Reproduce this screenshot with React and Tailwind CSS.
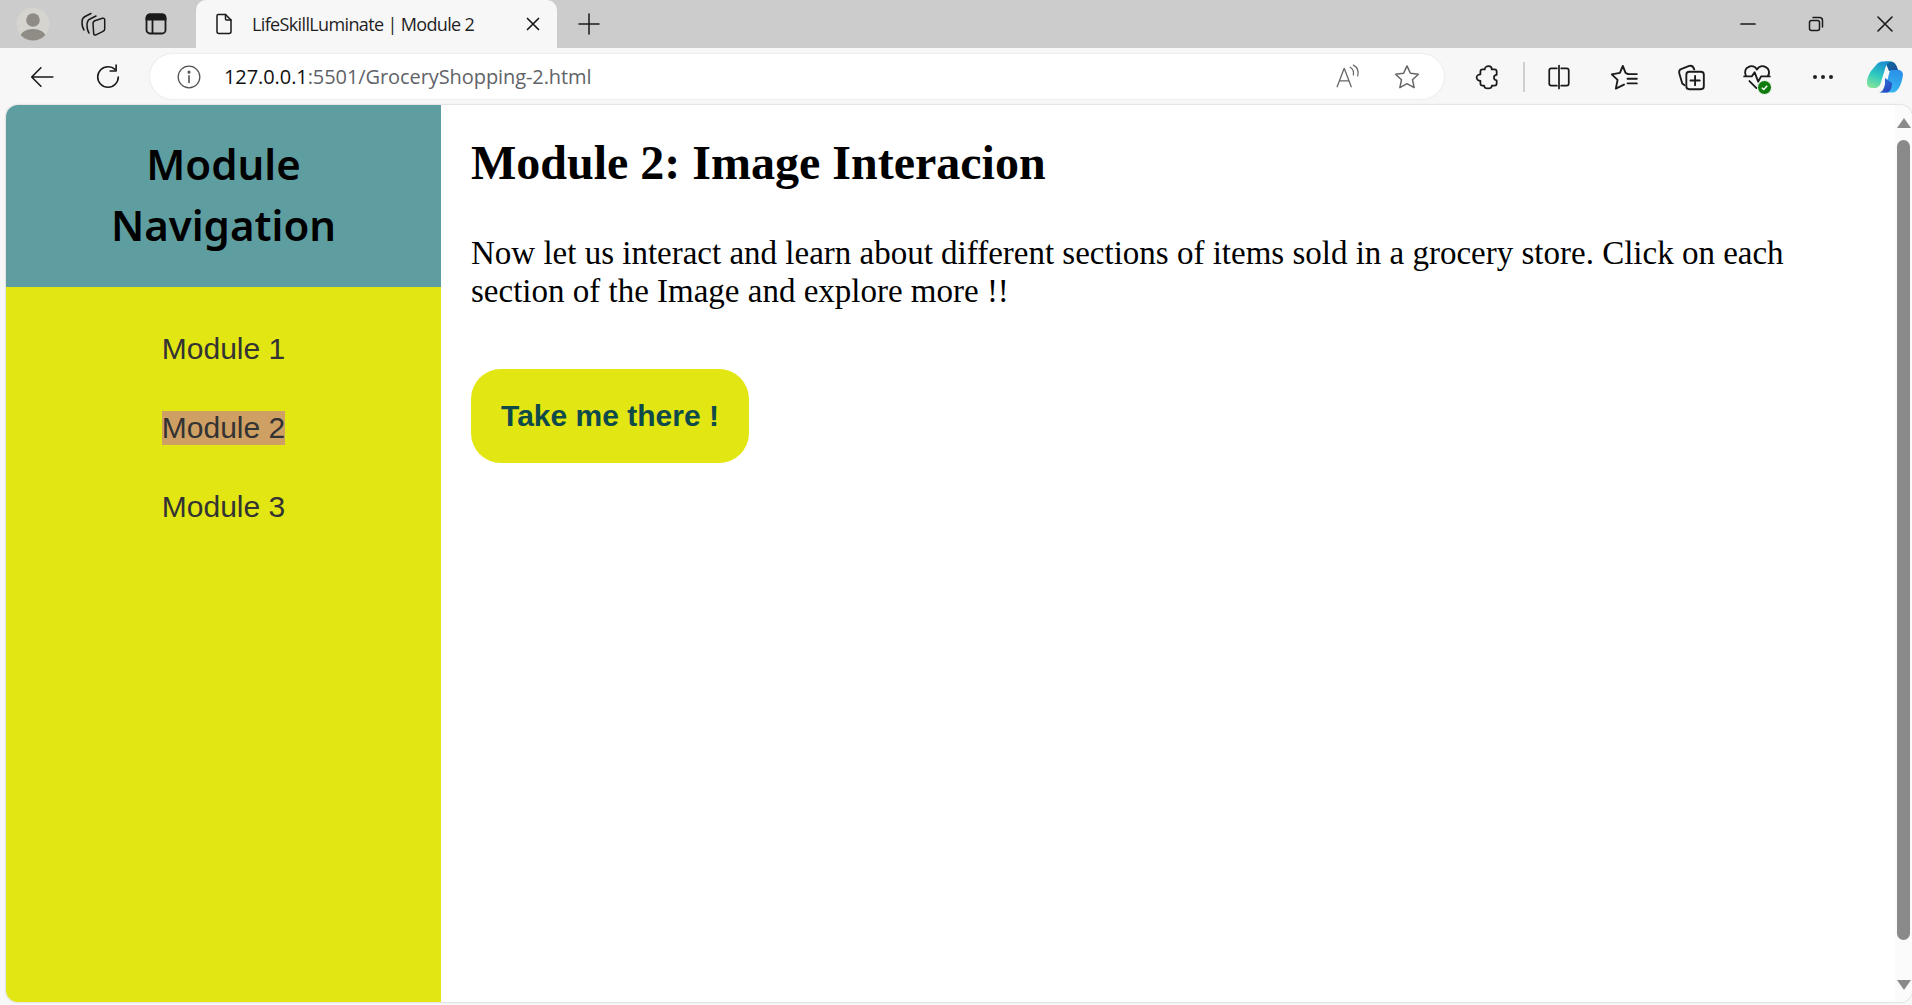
import React from "react";

const Ic = ({ className = "", children, vb = "0 0 24 24", sw = 1.6, stroke = "#1a1a1a" }) => (
  <svg viewBox={vb} fill="none" stroke={stroke} strokeWidth={sw} strokeLinecap="round" strokeLinejoin="round" className={className}>
    {children}
  </svg>
);

function Profile() {
  return (
    <svg viewBox="0 0 34 34" className="w-[34px] h-[34px]">
      <defs>
        <clipPath id="pc"><circle cx="17" cy="17" r="16.5" /></clipPath>
      </defs>
      <circle cx="17" cy="17" r="16.5" fill="#d6d4cf" />
      <g clipPath="url(#pc)" fill="#8f8b85">
        <circle cx="17" cy="13" r="6.8" />
        <ellipse cx="17" cy="30" rx="12.5" ry="8" />
      </g>
    </svg>
  );
}

function Copilot() {
  return (
    <svg viewBox="0 0 36 32" className="w-[36px] h-[32px]">
      <defs>
        <linearGradient id="cp1" x1="0.6" y1="0" x2="0.2" y2="1">
          <stop offset="0" stopColor="#1c8fd0" />
          <stop offset="0.5" stopColor="#2cc8c0" />
          <stop offset="1" stopColor="#86e49a" />
        </linearGradient>
        <linearGradient id="cp2" x1="0.7" y1="0" x2="0.4" y2="1">
          <stop offset="0" stopColor="#2a8fe8" />
          <stop offset="1" stopColor="#38b8f0" />
        </linearGradient>
        <linearGradient id="cp3" x1="0" y1="0" x2="0.6" y2="1">
          <stop offset="0" stopColor="#2f7de0" />
          <stop offset="1" stopColor="#2a45c0" />
        </linearGradient>
        <linearGradient id="cp4" x1="0" y1="0" x2="1" y2="1">
          <stop offset="0" stopColor="#0f6c9c" />
          <stop offset="1" stopColor="#1b4f9c" />
        </linearGradient>
      </defs>
      <path d="M18 0.500 H24 C27 0.500 29 3 30 6 L31.500 10 H22 Z" fill="url(#cp4)" />
      <path d="M24 9 H31 C34 9 36 11 36 14 C35 21 32 31 26 31.500 H12 C16 31 18 28 19 24 L22 13 C22.500 11 23 9 24 9Z" fill="url(#cp2)" />
      <path d="M18 17 L25 22 C25 27 23 31 20 31.500 H12 C16 31 17 27 18 23Z" fill="url(#cp3)" />
      <path d="M10 3 C12 1 14 0.500 17 0.500 H25 C21 1 19 4 18 8 L14 21 C13 25 11 27 7 27 H5 C1 27 0 24 0 21 C0 17 2 13 4 10 Z" fill="url(#cp1)" />
    </svg>
  );
}

const Nav = ({ children, active }) => (
  <a className={`block w-fit mx-auto mb-[45px] text-[30px] leading-[34px] text-[#333333] ${active ? "bg-[#cfa063]" : ""}`}>
    {children}
  </a>
);

export default function App() {
  return (
    <div className="w-[1912px] h-[1005px] overflow-hidden flex flex-col bg-[#f7f7f7] font-['Liberation_Sans',sans-serif]">
      {/* tab strip */}
      <div className="h-[48px] bg-[#cccccc] flex items-end shrink-0">
        <div className="w-[196px] h-[48px] flex items-center pl-[16px]">
          <Profile />
          <Ic className="w-[32px] h-[32px] ml-[28px]" vb="0 0 32 32" sw={1.5}>
            <path d="M6 22 C4.500 20 4 17 4 14 C4 11 5 9.500 7 8.500 L13 5.500" />
            <path d="M11 25 C9.500 23 9 20 9 17 C9 13.500 10 12 12 11 L18 8" />
            <path d="M17.500 12.500 L24.500 10.300 C26 9.900 26.700 10.600 26.700 12 V21 C26.700 22.200 26.200 22.900 25 23.300 L18 26.800 C16.500 27.500 15.700 26.800 15.700 25.500 L15 15.500 C15 14 15.800 13 17.500 12.500Z" />
          </Ic>
          <svg viewBox="0 0 22 22" className="w-[22px] h-[22px] ml-[35px]" fill="none" stroke="#1a1a1a" strokeWidth="1.8">
            <rect x="1.500" y="1.500" width="19" height="19" rx="3.500" />
            <path d="M1.500 6.500 V5 C1.500 3 3 1.500 5 1.500 H17 C19 1.500 20.500 3 20.500 5 V6.500Z" fill="#1a1a1a" />
            <path d="M7.500 6.500 V20.500" />
          </svg>
        </div>
        <div className="w-[361px] h-[48px] bg-[#f7f7f7] rounded-t-[10px] flex items-center">
          <Ic className="w-[24px] h-[26px] ml-[16px]" sw={1.5}>
            <path d="M6 2.500 H13.500 L19 8 V19.500 C19 20.800 18 21.500 17 21.500 H7 C6 21.500 5 20.800 5 19.500 V4 C5 3 5.500 2.500 6 2.500Z" />
            <path d="M13.500 2.500 V7 C13.500 7.700 14 8 14.500 8 H19" />
          </Ic>
          <span className="ml-[16px] w-[252px] text-[18px] text-[#1f1f1f] font-['Open_Sans',sans-serif] tracking-[-0.64px] whitespace-nowrap">
            LifeSkillLuminate | Module 2
          </span>
          <Ic className="w-[14px] h-[14px] ml-[22px]" vb="0 0 14 14" sw={1.7}>
            <path d="M1.500 1.500 L12.500 12.500 M12.500 1.500 L1.500 12.500" />
          </Ic>
        </div>
        <div className="h-[48px] flex items-center ml-[21px]">
          <Ic className="w-[22px] h-[22px]" vb="0 0 22 22" sw={1.5}>
            <path d="M11 1 V21 M1 11 H21" />
          </Ic>
        </div>
        <div className="flex-1" />
        <div className="h-[48px] flex items-center">
          <Ic className="w-[16px] h-[16px]" vb="0 0 16 16" sw={1.7}><path d="M1 8 H15" /></Ic>
          <Ic className="w-[16px] h-[16px] ml-[52px]" vb="0 0 16 16" sw={1.5}>
            <rect x="1.500" y="4.500" width="10" height="10" rx="2" />
            <path d="M5 1.500 H11.500 C13.500 1.500 14.500 2.500 14.500 4.500 V11" />
          </Ic>
          <Ic className="w-[16px] h-[16px] ml-[53px] mr-[19px]" vb="0 0 16 16" sw={1.6}><path d="M1 1 L15 15 M15 1 L1 15" /></Ic>
        </div>
      </div>

      {/* toolbar */}
      <div className="h-[57px] flex items-center shrink-0">
        <Ic className="w-[26px] h-[26px] ml-[29px]" sw={1.5}><path d="M22 12 H2.500 M11 3.500 L2.500 12 L11 20.500" /></Ic>
        <Ic className="w-[26px] h-[26px] ml-[40px]" sw={1.5}>
          <path d="M18.500 5 C16.800 3.300 14.600 2.500 12 2.500 C6.800 2.500 2.500 6.800 2.500 12 C2.500 17.200 6.800 21.500 12 21.500 C17.200 21.500 21.500 17.200 21.500 12" />
          <path d="M19.500 1 V6.500 H14" />
        </Ic>
        <div className="ml-[29px] w-[1294px] h-[45px] bg-white rounded-full flex items-center shadow-[0_0_2px_rgba(0,0,0,0.12)]">
          <Ic className="w-[26px] h-[26px] ml-[26px]" sw={1.2} stroke="#555">
            <circle cx="12" cy="12" r="10" />
            <path d="M12 11 V17" strokeWidth="1.5" />
            <circle cx="12" cy="7.500" r="0.8" fill="#555" />
          </Ic>
          <span className="ml-[22px] text-[20px] tracking-[-0.08px] text-[#5f6368] font-['Open_Sans',sans-serif] whitespace-nowrap">
            <span className="text-[#111111]">127.0.0.1</span>:5501/GroceryShopping-2.html
          </span>
          <div className="flex-1" />
          <Ic className="w-[26px] h-[26px]" sw={1.2} stroke="#666">
            <path d="M2 21 L8.500 4 L15 21 M4.500 15.500 H12.500" />
            <path d="M14 3 C16.500 4.500 17.500 7 17 10 M17 1 C20.500 3 22 7 21 11" />
          </Ic>
          <Ic className="w-[28px] h-[28px] ml-[32px] mr-[23px]" sw={1.3} stroke="#666">
            <path d="M12 2.500 L14.900 8.800 L21.800 9.600 L16.700 14.300 L18.100 21.100 L12 17.700 L5.900 21.100 L7.300 14.300 L2.200 9.600 L9.100 8.800Z" />
          </Ic>
        </div>
        <Ic className="w-[26px] h-[26px] ml-[31px]" sw={1.6}>
          <path d="M9 5 C9 3.500 10.500 2 12.500 2 C14.500 2 15.500 3.500 15.500 5 H18 C19.500 5 20 6 20 7 V10 C18.500 10 17.500 11 17.500 12.500 C17.500 14 18.500 15 20 15 V18 C20 19.500 19 20 18 20 H15.500 C15.500 21.500 14 22.500 12 22.500 C10 22.500 8.500 21.500 8.500 20 H7 C5.500 20 5 19 5 18 V15.500 C3 15.500 1.500 14 1.500 12.500 C1.500 11 3 9.500 5 9.500 V7 C5 6 5.500 5 7 5 H9Z" />
        </Ic>
        <div className="ml-[22px] w-[2px] h-[30px] bg-[#cfcfcf]" />
        <Ic className="w-[26px] h-[28px] ml-[21px]" sw={1.6}>
          <path d="M10 4 H5 C3.500 4 3 5 3 6 V18 C3 19 3.500 20 5 20 H10 M14 4 H19 C20.500 4 21 5 21 6 V18 C21 19 20.500 20 19 20 H14 M12 1.500 V22.500" />
        </Ic>
        <Ic className="w-[28px] h-[28px] ml-[38px]" sw={1.6}>
          <path d="M15.500 9.500 L13.300 8.500 L11 2.500 L8.500 8.500 L1.500 9.800 L6.500 14.500 L5 22 L12 18.500" />
          <path d="M16 9.500 H23 M15 13.500 H23 M15 17.500 H23" />
        </Ic>
        <Ic className="w-[28px] h-[28px] ml-[39px]" sw={1.6}>
          <path d="M6.500 19 L4.500 17.500 L2 9 C1.500 7 2.500 5.500 4 5 L10.500 2.500 C12.500 2 14 3 14.800 5.500" />
          <rect x="8" y="7.500" width="15" height="15" rx="2.500" />
          <path d="M15.500 11 V19 M11.500 15 H19.500" />
        </Ic>
        <div className="ml-[38px] relative w-[28px] h-[28px]">
          <Ic className="w-[28px] h-[28px]" sw={1.6}>
            <path d="M2.500 11 C1 8 2 4.500 4.500 3.500 C7.500 2 10.500 3 12 5.500 C13.500 3 16.500 2 19.500 3.500 C22.500 5 23 8.500 21.500 11" />
            <path d="M1 11.500 H7.500 L10 8 L13 16 L15.500 11.500 H23" />
            <path d="M5.500 15.500 L11.500 21.500" />
          </Ic>
          <span className="absolute right-[-1px] bottom-[-4px] w-[15px] h-[15px] rounded-full bg-[#107c10] border border-[#f7f7f7] flex items-center justify-center">
            <svg viewBox="0 0 10 10" className="w-[9px] h-[9px]" fill="none" stroke="#fff" strokeWidth="1.6"><path d="M2 5.200 L4.200 7.300 L8 3" /></svg>
          </span>
        </div>
        <div className="ml-[42px] flex gap-[4px]">
          <span className="w-[4px] h-[4px] rounded-full bg-[#222]" />
          <span className="w-[4px] h-[4px] rounded-full bg-[#222]" />
          <span className="w-[4px] h-[4px] rounded-full bg-[#222]" />
        </div>
        <div className="ml-[34px]"><Copilot /></div>
      </div>

      {/* page */}
      <div className="h-[897px] ml-[6px] flex bg-white rounded-[12px] overflow-hidden shadow-[0_0_2px_rgba(0,0,0,0.28)] shrink-0">
        <aside className="w-[435px] flex flex-col shrink-0">
          <div className="h-[182px] bg-[#5f9ea0] text-center text-black pt-[28px] text-[42px] leading-[61px] font-semibold font-['Noto_Sans',sans-serif]">
            Module<br />Navigation
          </div>
          <nav className="flex-1 bg-[#e2e612] pt-[45px]">
            <Nav>Module 1</Nav>
            <Nav active>Module 2</Nav>
            <Nav>Module 3</Nav>
          </nav>
        </aside>
        <main className="flex-1 pl-[30px] pr-[30px] font-['Liberation_Serif',serif] text-black">
          <h1 className="mt-[29px] text-[48px] leading-[58px] font-bold">Module 2: Image Interacion</h1>
          <p className="mt-[42px] text-[33px] leading-[38px]">
            Now let us interact and learn about different sections of items sold in a grocery store. Click on each section of the Image and explore more !!
          </p>
          <button className="mt-[59px] block w-[278px] h-[94px] pb-[2px] rounded-[30px] bg-[#e2e612] text-[30px] font-bold text-[#0f4a4a] font-['Liberation_Sans',sans-serif]">
            Take me there !
          </button>
        </main>
        <div className="w-[17px] shrink-0 bg-[#fbfbfb] flex flex-col items-center">
          <svg viewBox="0 0 14 10" className="w-[14px] h-[10px] mt-[13px]" fill="#8a8a8a"><path d="M7 0 L14 10 H0Z" /></svg>
          <div className="w-[13px] h-[800px] mt-[12px] rounded-full bg-[#8a8a8a]" />
          <svg viewBox="0 0 14 10" className="w-[14px] h-[10px] mt-[40px]" fill="#8a8a8a"><path d="M0 0 H14 L7 10Z" /></svg>
        </div>
      </div>
    </div>
  );
}
